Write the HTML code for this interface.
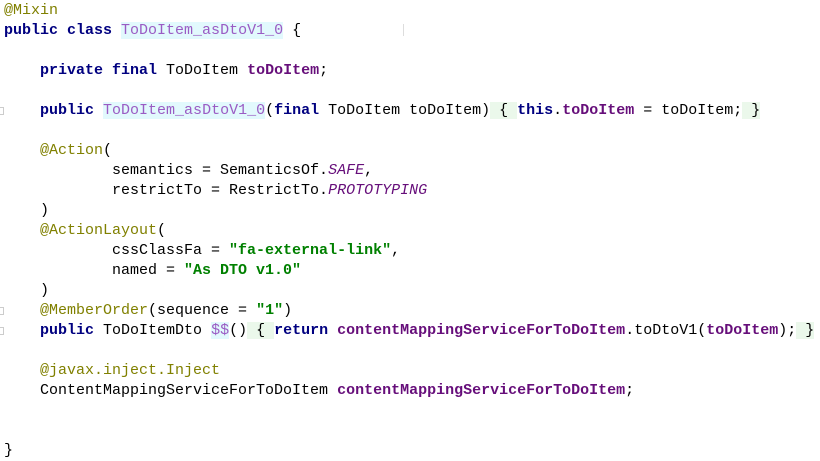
<html><head><style>
body{margin:0;background:#fff;width:820px;height:460px;overflow:hidden;position:relative}
pre{margin:0;position:absolute;left:4px;top:1px;font:15px/20px "Liberation Mono",monospace;color:#000;letter-spacing:0}
.k{color:#000080;font-weight:bold}
.f{color:#660e7a;font-weight:bold}
.a{color:#808000}
.s{color:#008000;font-weight:bold}
.i{color:#660e7a;font-style:italic}
.c{color:#9a5cc4;background:#e2f9fd}
.g{background:#ebf8eb}
.m{position:absolute;left:0;width:3px;height:6px;border:1px solid #ccc;border-left:none}
</style></head><body>
<pre><span class="a">@Mixin</span>
<span class="k">public class</span> <span class="c">ToDoItem_asDtoV1_0</span> {

    <span class="k">private final</span> ToDoItem <span class="f">toDoItem</span>;

    <span class="k">public</span> <span class="c">ToDoItem_asDtoV1_0</span>(<span class="k">final</span> ToDoItem toDoItem)<span class="g"> { </span><span class="k">this</span>.<span class="f">toDoItem</span> = toDoItem;<span class="g"> }</span>

    <span class="a">@Action</span>(
            semantics = SemanticsOf.<span class="i">SAFE</span>,
            restrictTo = RestrictTo.<span class="i">PROTOTYPING</span>
    )
    <span class="a">@ActionLayout</span>(
            cssClassFa = <span class="s">"fa-external-link"</span>,
            named = <span class="s">"As DTO v1.0"</span>
    )
    <span class="a">@MemberOrder</span>(sequence = <span class="s">"1"</span>)
    <span class="k">public</span> ToDoItemDto <span class="c">$$</span>()<span class="g"> { </span><span class="k">return</span> <span class="f">contentMappingServiceForToDoItem</span>.toDtoV1(<span class="f">toDoItem</span>);<span class="g"> }</span>

    <span class="a">@javax.inject.Inject</span>
    ContentMappingServiceForToDoItem <span class="f">contentMappingServiceForToDoItem</span>;


}</pre>
<div class="m" style="top:107px"></div>
<div class="m" style="top:307px"></div>
<div class="m" style="top:327px"></div>
<div style="position:absolute;left:403px;top:24px;width:1px;height:12px;background:#ddd"></div>
</body></html>
